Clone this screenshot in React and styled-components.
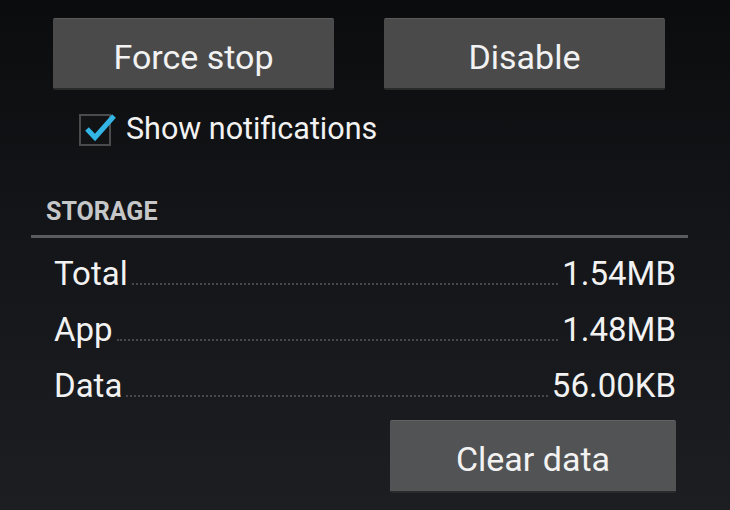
import React from 'react';
import styled, { createGlobalStyle } from 'styled-components';

const GlobalStyle = createGlobalStyle`
    html, body {
        margin: 0;
        padding: 0;
        background: #0c0d0f;
    }
    body {
        font-family: Roboto, "Liberation Sans", sans-serif;
        color: #f2f2f2;
    }
`;

const Screen = styled.div`
    width: 730px;
    height: 510px;
    overflow: hidden;
    background: linear-gradient(180deg, #0b0c0e 0%, #141518 45%, #1d1e21 100%);
    display: flex;
    flex-direction: column;
`;

const ButtonRow = styled.div`
    display: grid;
    grid-template-columns: 281px 281px;
    gap: 50px;
    padding: 18px 0 0 53px;
`;

const Button = styled.div`
    height: 72px;
    box-sizing: border-box;
    display: flex;
    align-items: center;
    justify-content: center;
    background: ${(p) => (p.light ? '#525355' : '#4a4a4b')};
    border-top: 1px solid ${(p) => (p.light ? '#626365' : '#5a5a5b')};
    border-bottom: 2px solid #2a2a2b;
    border-radius: 2px;
    font-size: 34px;
    color: #f2f2f2;
    padding-top: 6px;
`;

const CheckRow = styled.div`
    display: flex;
    align-items: center;
    gap: 15px;
    margin: 24px 0 0 79px;
    height: 32px;
`;

const CheckBox = styled.div`
    position: relative;
    width: 32px;
    height: 32px;
    box-sizing: border-box;
    border: 2px solid #4a4b4d;
    background: #121315;
`;

const CheckMark = styled.svg`
    position: absolute;
    left: -2px;
    top: -2px;
    overflow: visible;
`;

const CheckLabel = styled.span`
    font-size: 30.5px;
    color: #f2f2f2;
    margin-top: -3px;
`;

const SectionHeader = styled.div`
    margin: 52px 0 0 46px;
    font-size: 25px;
    font-weight: bold;
    line-height: 28px;
    color: #c6c7c9;
`;

const Divider = styled.div`
    margin: 9px 42px 0 31px;
    height: 3px;
    background: #5a5b5e;
`;

const List = styled.div`
    margin-top: 6px;
    padding: 0 54px;
`;

const Row = styled.div`
    display: flex;
    align-items: baseline;
    height: 56px;
    line-height: 60px;
    font-size: 33px;
    color: #f2f2f2;
`;

const Leader = styled.div`
    flex: 1;
    margin: 0 4px;
    border-bottom: 2px dotted #47484b;
`;

const Footer = styled.div`
    display: flex;
    justify-content: flex-end;
    padding: 8px 54px 0 0;
`;

const ClearButton = styled(Button)`
    width: 286px;
    height: 73px;
`;

const rows = [
    ['Total', '1.54MB'],
    ['App', '1.48MB'],
    ['Data', '56.00KB'],
];

export default function App() {
    return (
        <Screen>
            <GlobalStyle />
            <ButtonRow>
                <Button>Force stop</Button>
                <Button>Disable</Button>
            </ButtonRow>

            <CheckRow>
                <CheckBox>
                    <CheckMark width="36" height="36" viewBox="0 0 36 36">
                        <path d="M8 15 L16 23.5 L35 2" fill="none" stroke="#33b5e5" strokeWidth="5" />
                    </CheckMark>
                </CheckBox>
                <CheckLabel>Show notifications</CheckLabel>
            </CheckRow>

            <SectionHeader>STORAGE</SectionHeader>
            <Divider />

            <List>
                {rows.map(([label, value]) => (
                    <Row key={label}>
                        <span>{label}</span>
                        <Leader />
                        <span>{value}</span>
                    </Row>
                ))}
            </List>

            <Footer>
                <ClearButton light>Clear data</ClearButton>
            </Footer>
        </Screen>
    );
}
